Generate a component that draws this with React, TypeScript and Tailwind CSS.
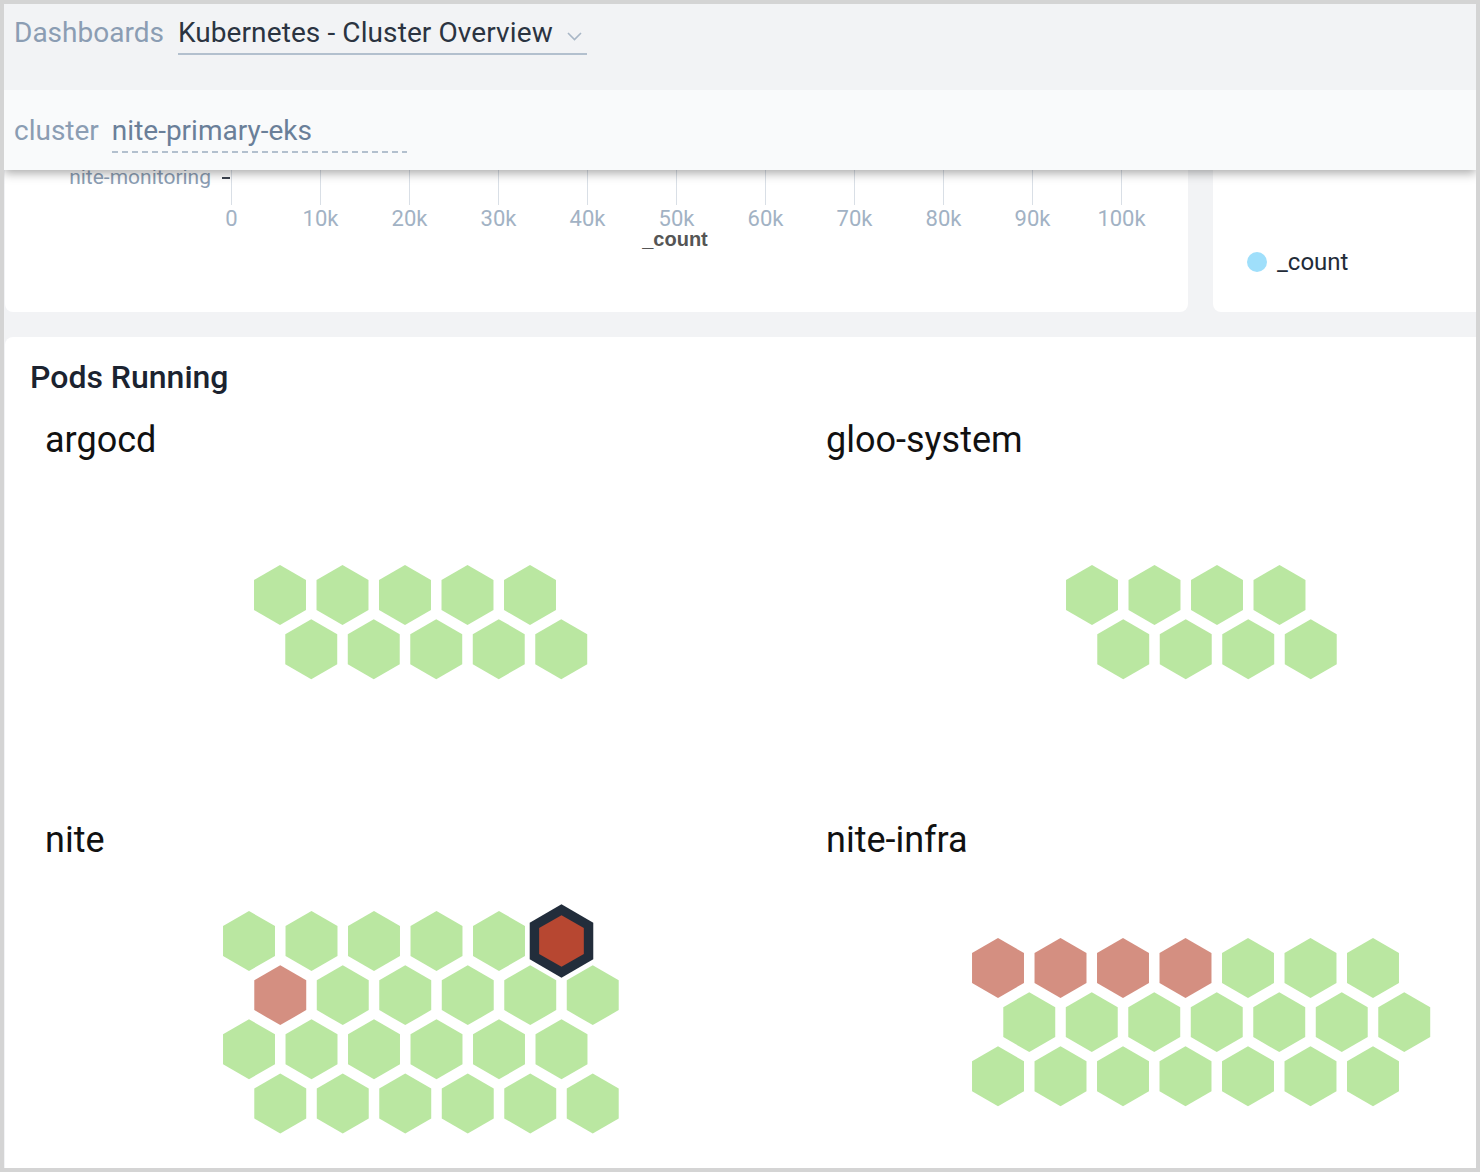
import React from "react"

type Cell = "ok" | "warn" | "crit"

const PX = 62.5 // horizontal pitch
const PY = 54.13 // vertical pitch
const HW = 26 // half width of a hex
const R = 30 // hex radius

const hexPoints = (cx: number, cy: number, r: number) => {
  const hw = r * 0.866
  return [
    [cx, cy - r],
    [cx + hw, cy - r / 2],
    [cx + hw, cy + r / 2],
    [cx, cy + r],
    [cx - hw, cy + r / 2],
    [cx - hw, cy - r / 2],
  ]
    .map((p) => p.join(","))
    .join(" ")
}

function HexGrid({ rows }: { rows: Cell[][] }) {
  const width = Math.max(...rows.map((r, i) => HW * 2 + (r.length - 1) * PX + (i % 2 ? PX / 2 : 0)))
  const height = R * 2 + (rows.length - 1) * PY
  return (
    <svg width={width} height={height} viewBox={`0 0 ${width} ${height}`} className="overflow-visible">
      {rows.map((row, ri) =>
        row.map((c, ci) => {
          const cx = HW + ci * PX + (ri % 2 ? PX / 2 : 0)
          const cy = R + ri * PY
          if (c === "crit") {
            return (
              <g key={`${ri}-${ci}`}>
                <polygon points={hexPoints(cx, cy, 36.7)} fill="#222d3b" />
                <polygon points={hexPoints(cx, cy, 25.8)} fill="#b74731" />
              </g>
            )
          }
          return <polygon key={`${ri}-${ci}`} points={hexPoints(cx, cy, R)} fill={c === "warn" ? "#d48f81" : "#bae7a1"} />
        })
      )}
    </svg>
  )
}

const g = (n: number): Cell[] => Array.from({ length: n }, () => "ok")

const namespaces: { name: string; rows: Cell[][] }[] = [
  { name: "argocd", rows: [g(5), g(5)] },
  { name: "gloo-system", rows: [g(4), g(4)] },
  { name: "nite", rows: [[...g(5), "crit"], ["warn", ...g(5)], g(6), g(6)] },
  { name: "nite-infra", rows: [["warn", "warn", "warn", "warn", ...g(3)], g(7), g(7)] },
]

const ticks = ["0", "10k", "20k", "30k", "40k", "50k", "60k", "70k", "80k", "90k", "100k"]

function BarChart() {
  return (
    <svg width={1183} height={182} className="block">
      {ticks.map((t, i) => (
        <line key={t} x1={226.5 + 89 * i} x2={226.5 + 89 * i} y1={0} y2={75} stroke="#d9dfe6" strokeWidth={1} />
      ))}
      <text x={206} y={47} textAnchor="end" dominantBaseline="central" fill="#8b9db3" fontSize={21} fontFamily="Roboto, sans-serif">
        nite-monitoring
      </text>
      <line x1={217} x2={225} y1={48} y2={48} stroke="#3d4450" strokeWidth={2} />
      {ticks.map((t, i) => (
        <text
          key={t}
          x={226.5 + 89 * i}
          y={88}
          textAnchor="middle"
          dominantBaseline="central"
          fill="#a2b2c4"
          fontSize={22}
          fontFamily="Roboto, sans-serif"
        >
          {t}
        </text>
      ))}
      <text x={670} y={109} textAnchor="middle" dominantBaseline="central" fill="#555555" fontSize={20} fontWeight={700} fontFamily="'Liberation Sans', Arial, sans-serif">
        _count
      </text>
    </svg>
  )
}

export default function App() {
  return (
    <div className="w-[1480px] h-[1172px] overflow-hidden border-4 border-[#d4d4d4] bg-[#f2f3f5] flex flex-col font-['Roboto',sans-serif]">
      {/* header */}
      <header className="relative z-10 shrink-0 shadow-[0_3px_10px_rgba(0,0,0,0.35)]">
        <div className="h-[86px] bg-[#f2f3f5] pl-[10px] pt-[11px] flex items-start text-[28px] leading-[36px]">
          <span className="text-[#8b9db3]">Dashboards</span>
          <div className="ml-[14px] flex items-center border-b-2 border-[#b3c0ce] pb-[2px] pr-[5px]">
            <span className="text-[#2b3441] tracking-[0.1px]">Kubernetes - Cluster Overview</span>
            <svg width="15" height="9" viewBox="0 0 15 9" className="ml-[14px] mt-[6px]" fill="none">
              <path d="M1 1l6.5 6.5L14 1" stroke="#a9b7c6" strokeWidth="1.6" />
            </svg>
          </div>
        </div>
        <div className="h-[80px] bg-[#f9fafb] pl-[10px] pt-[23px] flex items-start text-[28px] leading-[36px]">
          <span className="text-[#8b9db3]">cluster</span>
          <div className="ml-[13px] w-[295px] flex flex-col">
            <span className="text-[#6a7f99]">nite-primary-eks</span>
            <div className="mt-[2px] h-[2px] w-full bg-[repeating-linear-gradient(90deg,#b3c0ce_0_6px,transparent_6px_10px)]" />
          </div>
        </div>
      </header>

      {/* content */}
      <main className="flex flex-col gap-[25px] pl-px -mt-[40px]">
        <div className="flex gap-[25px] shrink-0">
          <div className="w-[1183px] h-[182px] bg-white rounded-b-[8px] shrink-0">
            <BarChart />
          </div>
          <div className="w-[400px] h-[182px] bg-white rounded-bl-[8px] shrink-0 pl-[34px] pt-[120px]">
            <div className="flex items-center gap-[10px] h-[24px]">
              <span className="w-[20px] h-[20px] rounded-full bg-[#9fdffb]" />
              <span className="text-[24px] leading-[24px] text-[#222b38]">_count</span>
            </div>
          </div>
        </div>

        <section className="w-[1620px] shrink-0 bg-white rounded-tl-[8px] pt-[20px] pl-[25px]">
          <h2 className="text-[32px] leading-[40px] font-medium text-[#1b2330]">Pods Running</h2>
          <div className="mt-[18px] grid grid-cols-[781px_781px]">
            {namespaces.map((ns) => (
              <div key={ns.name} className="h-[400px] flex flex-col">
                <h3 className="pl-[15px] text-[36px] leading-[50px] text-[#111111]">{ns.name}</h3>
                <div className="h-[314px] flex items-center justify-center">
                  <HexGrid rows={ns.rows} />
                </div>
              </div>
            ))}
          </div>
        </section>
      </main>
    </div>
  )
}
